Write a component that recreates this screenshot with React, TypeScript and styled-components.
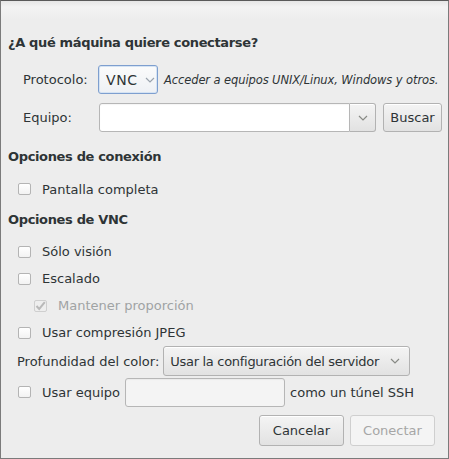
import React from "react";
import styled, { createGlobalStyle, css } from "styled-components";

const Global = createGlobalStyle`
  html, body { margin: 0; padding: 0; background: #ededed; }
  body { font-family: "DejaVu Sans", sans-serif; font-size: 13px; color: #2e3436; }
  * { box-sizing: border-box; }
`;

const Window = styled.div`
  width: 449px;
  height: 459px;
  border: 1px solid #7b7b7b;
  border-top-color: #5a5a5a;
  background: linear-gradient(#e6e6e6 0px, #f3f3f3 6px, #f0f0f0 12px, #ededed 18px, #ededed 100%);
  display: flex;
  flex-direction: column;
  padding: 33px 13px 0 0;
`;

const Heading = styled.div<{ $mt?: number }>`
  font-weight: bold;
  line-height: 18px;
  height: 18px;
  padding-left: 7px;
  letter-spacing: -0.35px;
  margin-top: ${(p) => p.$mt ?? 0}px;
`;

const FormGrid = styled.div`
  display: grid;
  grid-template-columns: 75px auto;
  row-gap: 9px;
  padding-left: 22px;
  margin-top: 13px;
`;

const FieldLabel = styled.div`
  display: flex;
  align-items: center;
  height: 29px;
`;

const Line = styled.div`
  display: flex;
  align-items: center;
`;

const buttonFace = css`
  border: 1px solid #b2b2b2;
  border-radius: 3px;
  background: linear-gradient(#f4f4f4, #e2e2e2);
  box-shadow: inset 0 1px #ffffff;
`;

const ProtoCombo = styled.div`
  width: 60px;
  height: 29px;
  border: 1px solid #7e9fcf;
  border-radius: 3px;
  background: linear-gradient(#fbfbfb, #eef1f5);
  box-shadow: inset 0 0 0 1px #d5e3f3;
  display: flex;
  align-items: center;
  padding: 0 0 0 7px;
  gap: 7px;
  font-size: 14px;
  letter-spacing: 0.6px;
`;

const Hint = styled.span`
  font-style: italic;
  font-size: 11.5px;
  letter-spacing: -0.1px;
  margin-left: 6px;
  white-space: nowrap;
`;

const Entry = styled.div<{ $w: number; $joined?: boolean; $muted?: boolean }>`
  width: ${(p) => p.$w}px;
  height: 29px;
  border: 1px solid #b6b6b6;
  border-radius: ${(p) => (p.$joined ? "3px 0 0 3px" : "3px")};
  background: ${(p) => (p.$muted ? "#f4f4f4" : "#ffffff")};
  box-shadow: inset 0 1px 1px rgba(0,0,0,0.04);
`;

const DropButton = styled.div`
  ${buttonFace};
  border-radius: 0 3px 3px 0;
  border-left: none;
  width: 26px;
  height: 29px;
  display: flex;
  align-items: center;
  justify-content: center;
`;

const PushButton = styled.div<{ $w: number; $h?: number; $disabled?: boolean }>`
  ${buttonFace};
  width: ${(p) => p.$w}px;
  height: ${(p) => p.$h ?? 29}px;
  display: flex;
  align-items: center;
  justify-content: center;
  ${(p) =>
    p.$disabled &&
    css`
      background: #f4f4f4;
      border-color: #cfcfcf;
      box-shadow: none;
      color: #a6a6a6;
    `}
`;

const CheckRow = styled.label<{ $indent?: number; $h?: number; $mt?: number; $disabled?: boolean }>`
  display: flex;
  align-items: center;
  height: ${(p) => p.$h ?? 27}px;
  margin-top: ${(p) => p.$mt ?? 0}px;
  padding-left: ${(p) => p.$indent ?? 17}px;
  color: ${(p) => (p.$disabled ? "#a0a3a4" : "inherit")};
`;

const Box = styled.span<{ $disabled?: boolean }>`
  width: 13px;
  height: 12px;
  border: 1px solid ${(p) => (p.$disabled ? "#cfcfcf" : "#b4b4b4")};
  border-radius: 2px;
  background: ${(p) => (p.$disabled ? "#eeeeee" : "linear-gradient(#ffffff, #f2f2f2)")};
  margin-right: 11px;
  display: flex;
  align-items: center;
  justify-content: center;
  flex: none;
`;

const ColorRow = styled.div`
  display: flex;
  align-items: center;
  height: 30px;
  padding-left: 16px;
  gap: 4px;
`;

const Combo = styled.div`
  ${buttonFace};
  width: 247px;
  height: 30px;
  display: flex;
  align-items: center;
  justify-content: space-between;
  padding: 0 9px 0 6px;
  letter-spacing: -0.3px;
`;

const TunnelRow = styled.div`
  display: flex;
  align-items: center;
  height: 30px;
  margin-top: 1px;
  padding-left: 17px;
`;

const Actions = styled.div`
  display: flex;
  justify-content: flex-end;
  gap: 6px;
  margin-top: 8px;
`;

const Chevron = ({ color = "#888a85" }: { color?: string }) => (
  <svg width="10" height="6" viewBox="0 0 10 6">
    <path d="M1 1 L5 5 L9 1" fill="none" stroke={color} strokeWidth="1.2" />
  </svg>
);

const Tick = () => (
  <svg width="11" height="10" viewBox="0 0 11 10">
    <path d="M1.5 5 L4.2 8 L9.8 1.2" fill="none" stroke="#b9b9b9" strokeWidth="2" />
  </svg>
);

export default function App() {
  return (
    <>
      <Global />
      <Window>
        <Heading>¿A qué máquina quiere conectarse?</Heading>
        <FormGrid>
          <FieldLabel>Protocolo:</FieldLabel>
          <Line>
            <ProtoCombo>
              VNC <Chevron color="#9aa3ad" />
            </ProtoCombo>
            <Hint>Acceder a equipos UNIX/Linux, Windows y otros.</Hint>
          </Line>
          <FieldLabel>Equipo:</FieldLabel>
          <Line>
            <Entry $w={251} $joined style={{ marginLeft: 1 }} />
            <DropButton>
              <Chevron />
            </DropButton>
            <PushButton $w={59} style={{ marginLeft: 7 }}>Buscar</PushButton>
          </Line>
        </FormGrid>
        <Heading $mt={16}>Opciones de conexión</Heading>
        <CheckRow $h={24} $mt={11}>
          <Box />
          Pantalla completa
        </CheckRow>
        <Heading $mt={10}>Opciones de VNC</Heading>
        <CheckRow $mt={9}>
          <Box />
          Sólo visión
        </CheckRow>
        <CheckRow>
          <Box />
          Escalado
        </CheckRow>
        <CheckRow $indent={33} $disabled>
          <Box $disabled>
            <Tick />
          </Box>
          Mantener proporción
        </CheckRow>
        <CheckRow>
          <Box />
          Usar compresión JPEG
        </CheckRow>
        <ColorRow>
          Profundidad del color:
          <Combo>
            Usar la configuración del servidor <Chevron />
          </Combo>
        </ColorRow>
        <TunnelRow>
          <Box />
          Usar equipo
          <Entry $w={160} $muted style={{ margin: "0 5px 0 5px" }} />
          como un túnel SSH
        </TunnelRow>
        <Actions>
          <PushButton $w={85} $h={31}>Cancelar</PushButton>
          <PushButton $w={85} $h={31} $disabled>Conectar</PushButton>
        </Actions>
      </Window>
    </>
  );
}
